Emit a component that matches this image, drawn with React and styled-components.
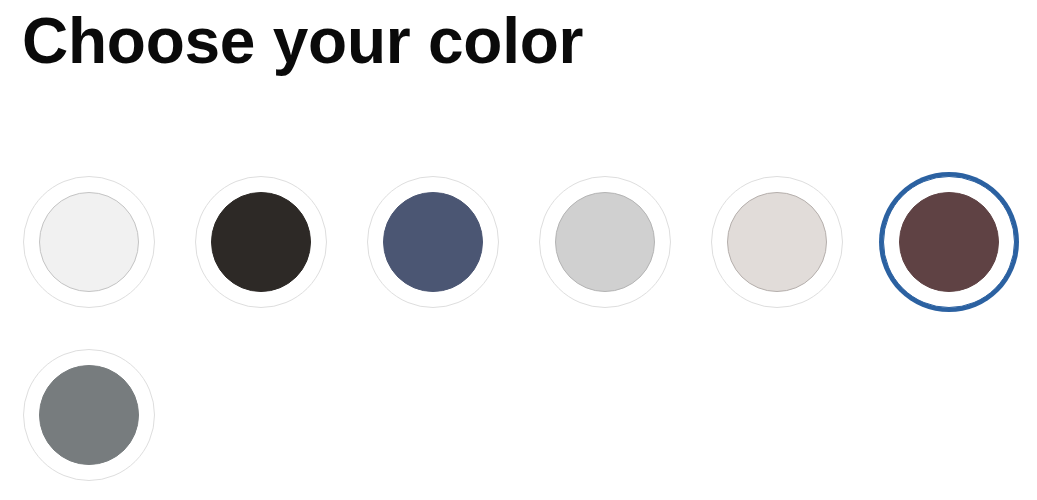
import React, { useState } from "react";
import styled, { createGlobalStyle } from "styled-components";

const GlobalStyle = createGlobalStyle`
  body {
    margin: 0;
    background: #fff;
    font-family: "Liberation Sans", Arial, sans-serif;
  }
`;

const Page = styled.div`
  padding: 0 24px 0 23px;
`;

const Title = styled.h1`
  margin: 0 0 0 -1px;
  padding-top: 4px;
  font-size: 64px;
  font-weight: 700;
  line-height: 74px;
  letter-spacing: -0.25px;
  color: #0a0a0a;
`;

const Swatches = styled.div`
  display: flex;
  flex-wrap: wrap;
  column-gap: 40px;
  row-gap: 41px;
  margin-top: 98px;
  width: 992px;
`;

const Swatch = styled.button`
  width: 132px;
  height: 132px;
  padding: 0;
  border-radius: 50%;
  background: #fff;
  border: 1px solid ${(p) => (p.$selected ? "#2b61a1" : "#dedede")};
  box-shadow: ${(p) => (p.$selected ? "0 0 0 4px #2b61a1" : "none")};
  display: flex;
  align-items: center;
  justify-content: center;
  cursor: pointer;
`;

const Dot = styled.span`
  width: 100px;
  height: 100px;
  margin-left: -1px;
  border-radius: 50%;
  box-sizing: border-box;
  background: ${(p) => p.$color};
  border: 1px solid ${(p) => p.$edge || p.$color};
`;

const colors = [
  { name: "White", color: "#f1f1f1", edge: "#c4c4c4" },
  { name: "Black", color: "#2d2926" },
  { name: "Navy", color: "#4b5673" },
  { name: "Silver", color: "#d0d0d0", edge: "#b4b4b4" },
  { name: "Greige", color: "#e1dcd9", edge: "#b5afac" },
  { name: "Burgundy", color: "#5f4244" },
  { name: "Slate", color: "#777c7e" },
];

function App() {
  const [selected, setSelected] = useState("Burgundy");
  return (
    <Page>
      <GlobalStyle />
      <Title>Choose your color</Title>
      <Swatches>
        {colors.map((c) => (
          <Swatch
            key={c.name}
            aria-label={c.name}
            $selected={selected === c.name}
            onClick={() => setSelected(c.name)}
          >
            <Dot $color={c.color} $edge={c.edge} />
          </Swatch>
        ))}
      </Swatches>
    </Page>
  );
}

export default App;
